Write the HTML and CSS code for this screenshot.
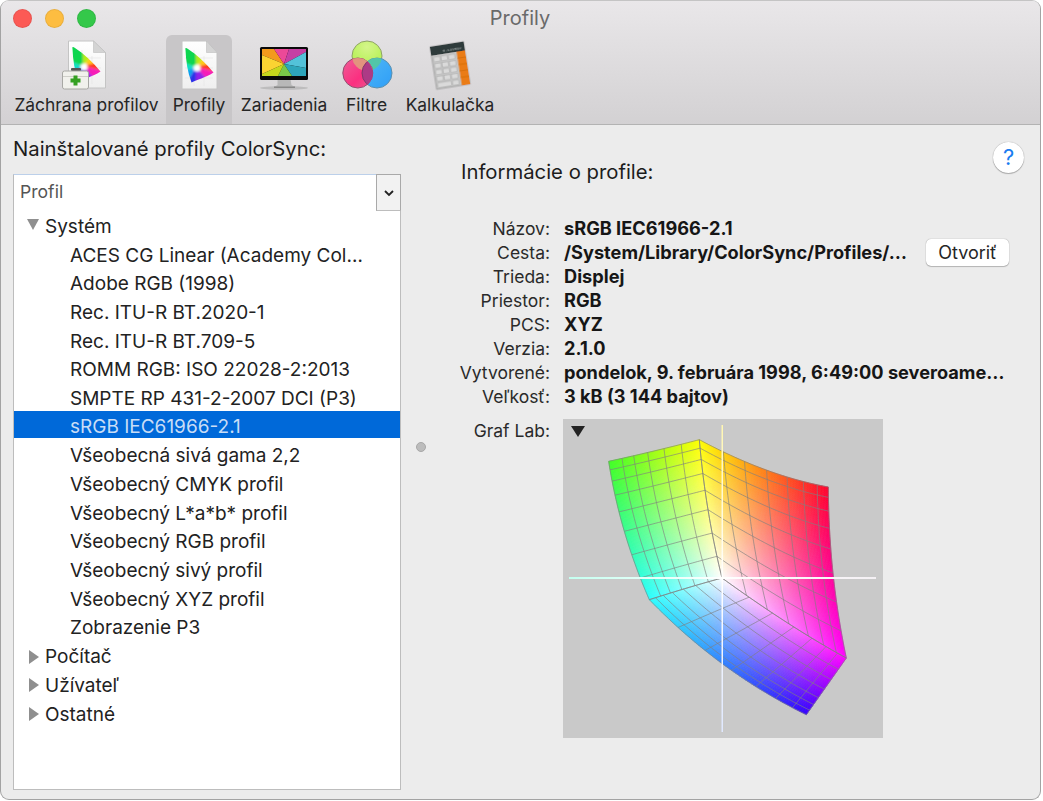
FILE: index.html
```html
<!DOCTYPE html>
<html lang="sk">
<head>
<meta charset="utf-8">
<title>Profily</title>
<link rel="stylesheet" href="styles.css">
</head>
<body>
<div class="window">
  <header class="chrome">
    <div class="titlebar">
      <div class="lights"><span class="light red"></span><span class="light yellow"></span><span class="light green"></span></div>
      <div class="title">Profily</div>
    </div>
    <nav class="toolbar">
      <div class="tool">
        <svg class="icon" viewBox="0 0 60 56" width="60" height="56">
          <defs>
            <filter id="soft" x="-30%" y="-30%" width="160%" height="160%"><feGaussianBlur stdDeviation="1"/></filter>
            <filter id="tiny" x="-10%" y="-10%" width="120%" height="120%"><feGaussianBlur stdDeviation=".35"/></filter>
            <clipPath id="tri"><path d="M3.500 9 C3 6.500 4 6.500 6 8 C15 14 24 22 31.500 31.500 C23 37 15 38.500 9.500 41.500 C5.500 31 4 20 3.500 9Z"/></clipPath>
            <linearGradient id="pg" x1="0" y1="0" x2="0" y2="1"><stop offset="0" stop-color="#ffffff"/><stop offset="1" stop-color="#efefef"/></linearGradient>
            <g id="gamut">
              <g clip-path="url(#tri)">
                <g filter="url(#soft)">
                  <path d="M14 26 L-4 20 L-4 0 L14 4Z" fill="#0fd650"/>
                  <path d="M14 26 L14 4 L24 14Z" fill="#b4ec18"/>
                  <path d="M14 26 L24 14 L30 22Z" fill="#ffc814"/>
                  <path d="M14 26 L30 22 L38 32Z" fill="#ff3a1e"/>
                  <path d="M14 26 L38 32 L30 44Z" fill="#f61cb8"/>
                  <path d="M14 26 L30 44 L14 46Z" fill="#9020e8"/>
                  <path d="M14 26 L14 46 L2 46Z" fill="#2a30e8"/>
                  <path d="M14 26 L2 46 L-4 32Z" fill="#10a0ee"/>
                  <path d="M14 26 L-4 32 L-4 20Z" fill="#10e0c0"/>
                  <circle cx="15" cy="27" r="3.500" fill="#fff"/>
                </g>
              </g>
            </g>
            <clipPath id="pinkc"><circle cx="15.800" cy="35" r="15"/></clipPath>
            <clipPath id="greenc"><circle cx="24.500" cy="18" r="15"/></clipPath>
            <radialGradient id="gg" cx=".5" cy=".2" r=".9"><stop offset="0" stop-color="#d4f58a"/><stop offset="1" stop-color="#aaf040"/></radialGradient>
            <linearGradient id="pk" x1="0" y1="0" x2="1" y2="1"><stop offset="0" stop-color="#ee5f97"/><stop offset=".6" stop-color="#fb2f80"/><stop offset="1" stop-color="#e9578f"/></linearGradient>
            <linearGradient id="bl" x1="0" y1="0" x2="1" y2="1"><stop offset="0" stop-color="#50b8f5"/><stop offset="1" stop-color="#2f9ef8"/></linearGradient>
          </defs>
          <g filter="url(#tiny)">
            <path d="M11.500 3 H36.500 L48.500 14.500 V50 H11.500Z" fill="url(#pg)" stroke="#c4c4c4"/>
            <path d="M36.500 3 V14.500 H48.500Z" fill="#d4d4d4" stroke="#bdbdbd" stroke-width=".6"/>
            <g stroke="#e2e2e2" stroke-width=".6"><path d="M16 20 H44 M16 30 H44 M25 12 V46 M35 18 V46"/></g>
            <use href="#gamut" x="12" y="2"/>
            <rect x="14" y="30" width="10" height="3" rx="1" fill="#555"/>
            <rect x="5.500" y="33" width="26" height="18" rx="2" fill="#f1f1ec" stroke="#a8a8a4"/>
            <path d="M6 38.500 H31" stroke="#c6c6c0" stroke-width=".8"/>
            <path d="M16.500 37.500 H20.500 V40.500 H23.500 V44.500 H20.500 V47.500 H16.500 V44.500 H13.500 V40.500 H16.500Z" fill="#34a020"/>
          </g>
        </svg>
        <span class="tool-label">Záchrana profilov</span>
      </div>
      <div class="tool active">
        <svg class="icon" viewBox="0 0 60 56" width="60" height="56">
          <g filter="url(#tiny)">
            <path d="M12.500 3 H37 L47.500 14.500 V51 H12.500Z" fill="url(#pg)" stroke="#c4c4c4" transform="translate(.5 0)"/>
            <path d="M37.500 3 V14.500 H48Z" fill="#d4d4d4" stroke="#bdbdbd" stroke-width=".6"/>
            <g stroke="#e4e4e4" stroke-width=".6"><path d="M16 20 H44 M16 30 H44 M16 40 H44 M25 12 V48 M35 18 V48"/></g>
            <use href="#gamut" x="13" y="3"/>
          </g>
        </svg>
        <span class="tool-label">Profily</span>
      </div>
      <div class="tool">
        <svg class="icon" viewBox="0 0 60 56" width="60" height="56">
          <ellipse cx="30" cy="50" rx="24" ry="1.800" fill="#aaa" opacity=".6"/>
          <path d="M23.500 41 H36.500 L37.500 47 L41 49 H20 L23.500 47Z" fill="#b8b8b8"/>
          <path d="M20 48.500 H41 V50 H20Z" fill="#888"/>
          <rect x="6" y="9" width="48" height="33" rx="1.500" fill="#0a0a0a"/>
          <g filter="url(#tiny)">
            <path d="M8 11 H20 L30 26 L8 17Z" fill="#f39a1c"/>
            <path d="M20 11 H35 L30 26Z" fill="#ec4a98"/>
            <path d="M35 11 H52 V14 L30 26Z" fill="#c640a4"/>
            <path d="M52 14 V30 L30 26Z" fill="#52c2d9"/>
            <path d="M52 30 V38 H38 L30 26Z" fill="#2ea6bb"/>
            <path d="M38 38 H24 L30 26Z" fill="#79c948"/>
            <path d="M24 38 H8 V36 L30 26Z" fill="#c6d71e"/>
            <path d="M8 36 V17 L30 26Z" fill="#fbd331"/>
          </g>
        </svg>
        <span class="tool-label">Zariadenia</span>
      </div>
      <div class="tool">
        <svg class="icon" viewBox="0 0 60 56" width="60" height="56">
          <circle cx="30" cy="18" r="15" fill="url(#gg)" stroke="#8fa367"/>
          <circle cx="40" cy="35" r="15" fill="url(#bl)" stroke="#5b8fae"/>
          <g clip-path="url(#greenc)" transform="translate(5.500 0)"><circle cx="34.500" cy="35" r="15" fill="#52c6a8"/></g>
          <circle cx="20.800" cy="35" r="15" fill="url(#pk)" stroke="#925070"/>
          <g clip-path="url(#pinkc)" transform="translate(5 0)">
            <circle cx="25" cy="18" r="15" fill="#e2937e"/>
            <circle cx="35" cy="35" r="15" fill="#ad3a86" stroke="#7f3a6a"/>
          </g>
        </svg>
        <span class="tool-label">Filtre</span>
      </div>
      <div class="tool">
        <svg class="icon" viewBox="0 0 60 56" width="60" height="56">
          <g transform="translate(-3 0) rotate(-9 33 27)" filter="url(#tiny)">
            <rect x="16" y="6" width="34" height="43" fill="#c4c4c4" stroke="#8c8c8c" stroke-width=".6"/>
            <rect x="16" y="6" width="34" height="9" fill="#2f3b3b"/>
            <text x="47" y="13" class="calc-display">3.141592</text>
            <rect x="41.500" y="15" width="8.500" height="34" fill="#ea7c12"/>
            <g fill="#dadada" stroke="#a8a8a8" stroke-width=".4">
              <rect x="18" y="17" width="6" height="4.500"/><rect x="25.500" y="17" width="6" height="4.500"/><rect x="33" y="17" width="6" height="4.500"/>
              <rect x="18" y="23.500" width="6" height="4.500"/><rect x="25.500" y="23.500" width="6" height="4.500"/><rect x="33" y="23.500" width="6" height="4.500"/>
              <rect x="18" y="30" width="6" height="4.500"/><rect x="25.500" y="30" width="6" height="4.500"/><rect x="33" y="30" width="6" height="4.500"/>
              <rect x="18" y="36.500" width="6" height="4.500"/><rect x="25.500" y="36.500" width="6" height="4.500"/><rect x="33" y="36.500" width="6" height="4.500"/>
              <rect x="18" y="43" width="13.500" height="4.500"/><rect x="33" y="43" width="6" height="4.500"/>
            </g>
            <path d="M41.500 21.500 H50 M41.500 28 H50 M41.500 34.500 H50 M41.500 41 H50" stroke="#c46408" stroke-width=".5"/>
          </g>
        </svg>
        <span class="tool-label">Kalkulačka</span>
      </div>
    </nav>
  </header>

  <main class="content">
    <section class="left">
      <h2 class="heading">Nainštalované profily ColorSync:</h2>
      <div class="list-header">
        <div class="list-column">Profil</div>
        <div class="list-chevron">
          <svg viewBox="0 0 12 8" width="12" height="8"><path d="M2 2 L6 6 L10 2" fill="none" stroke="#222" stroke-width="1.800"/></svg>
        </div>
      </div>
      <div class="tree">
        <div class="row group"><span class="tri tri-down"></span>Systém</div>
        <div class="row child">ACES CG Linear (Academy Col…</div>
        <div class="row child">Adobe RGB (1998)</div>
        <div class="row child">Rec. ITU-R BT.2020-1</div>
        <div class="row child">Rec. ITU-R BT.709-5</div>
        <div class="row child">ROMM RGB: ISO 22028-2:2013</div>
        <div class="row child">SMPTE RP 431-2-2007 DCI (P3)</div>
        <div class="row child selected">sRGB IEC61966-2.1</div>
        <div class="row child">Všeobecná sivá gama 2,2</div>
        <div class="row child">Všeobecný CMYK profil</div>
        <div class="row child">Všeobecný L*a*b* profil</div>
        <div class="row child">Všeobecný RGB profil</div>
        <div class="row child">Všeobecný sivý profil</div>
        <div class="row child">Všeobecný XYZ profil</div>
        <div class="row child">Zobrazenie P3</div>
        <div class="row group"><span class="tri"></span>Počítač</div>
        <div class="row group"><span class="tri"></span>Užívateľ</div>
        <div class="row group"><span class="tri"></span>Ostatné</div>
      </div>
    </section>

    <div class="splitter"><span class="split-dot"></span></div>

    <section class="right">
      <button class="help" type="button">?</button>
      <h2 class="heading info-heading">Informácie o profile:</h2>
      <div class="info">
        <div class="info-row"><span class="key">Názov:</span><span class="val">sRGB IEC61966-2.1</span></div>
        <div class="info-row"><span class="key">Cesta:</span><span class="val path">/System/Library/ColorSync/Profiles/…</span><button class="open" type="button">Otvoriť</button></div>
        <div class="info-row"><span class="key">Trieda:</span><span class="val">Displej</span></div>
        <div class="info-row"><span class="key">Priestor:</span><span class="val">RGB</span></div>
        <div class="info-row"><span class="key">PCS:</span><span class="val">XYZ</span></div>
        <div class="info-row"><span class="key">Verzia:</span><span class="val">2.1.0</span></div>
        <div class="info-row"><span class="key">Vytvorené:</span><span class="val">pondelok, 9. februára 1998, 6:49:00 severoame…</span></div>
        <div class="info-row"><span class="key">Veľkosť:</span><span class="val">3 kB (3 144 bajtov)</span></div>
      </div>
      <div class="graph-row">
        <span class="key graph-key">Graf Lab:</span>
        <div class="graph">
          <canvas id="lab" width="320" height="319"></canvas>
          <span class="graph-tri"></span>
        </div>
      </div>
    </section>
  </main>
</div>
<script src="script.js"></script>
</body>
</html>
```
FILE: styles.css
```css
* { box-sizing: border-box; }
html, body { margin: 0; padding: 0; background: #fff; }
body {
  width: 1043px;
  height: 801px;
  overflow: hidden;
  font-family: Inter, "Liberation Sans", sans-serif;
  color: #1e1e1e;
}
.window {
  width: 1041px;
  height: 800px;
  display: flex;
  flex-direction: column;
  background: #ececec;
  border: 1px solid #a3a3a3;
  border-top-color: #c4c4c4;
  border-radius: 9px;
  overflow: hidden;
}
.chrome {
  height: 124px;
  flex: none;
  background: linear-gradient(#e9e7e9, #d3d1d3);
  border-bottom: 1px solid #b3b3b3;
}
.titlebar {
  height: 34px;
  display: flex;
  align-items: center;
  position: relative;
}
.lights { display: flex; gap: 13px; padding-left: 11.500px; }
.light { width: 19px; height: 19px; border-radius: 50%; border: 1px solid rgba(0,0,0,.08); }
.red { background: #fc5a55; }
.yellow { background: #fdbd41; }
.green { background: #34c84a; }
.title {
  position: absolute;
  left: 0;
  right: 1px;
  top: 5px;
  text-align: center;
  font-size: 20px;
  line-height: 24px;
  color: #6a6a6a;
}
.toolbar {
  display: grid;
  grid-template-columns: 159px 66px 104px 61px 106px;
  height: 89px;
  padding-left: 6px;
}
.tool {
  display: flex;
  flex-direction: column;
  align-items: center;
  white-space: nowrap;
  padding-top: 3px;
}
.tool.active { background: #c8c6c8; border-radius: 6px 6px 0 0; }
.icon { display: block; flex: none; }
.tool-label { font-size: 17.400px; line-height: 22px; color: #262626; }
.calc-display { font-family: "Liberation Mono", monospace; font-size: 4px; fill: #aab4b4; text-anchor: end; }

.content {
  flex: 1;
  display: grid;
  grid-template-columns: 388px 39px 1fr;
  min-height: 0;
  padding-left: 12px;
}
.left { display: flex; flex-direction: column; padding-top: 10px; }
.heading { margin: 0; font-weight: 400; font-size: 20.300px; line-height: 28px; color: #1c1c1c; white-space: nowrap; }
.list-header {
  display: flex;
  height: 37px;
  margin-top: 11px;
  flex: none;
}
.list-column {
  flex: 1;
  background: #fff;
  border-top: 1px solid #bcd0ea;
  border-left: 1px solid #bbb;
  padding-left: 6px;
  font-size: 17.600px;
  line-height: 34px;
  color: #555;
}
.list-chevron {
  width: 25px;
  background: #f2f2f2;
  border: 1px solid #a9a9a9;
  border-bottom-color: #bdbdbd;
  display: flex;
  align-items: center;
  justify-content: center;
}
.tree {
  height: 579px;
  flex: none;
  background: #fff;
  border: 1px solid #bdbdbd;
  border-top: 0;
  padding-top: 1px;
  font-size: 19px;
  color: #222;
}
.row { height: 28.700px; display: flex; align-items: center; white-space: nowrap; }
.group { padding-left: 13px; }
.child { padding-left: 56px; }
.selected {
  height: 27.500px;
  margin: -2px 0 3.200px;
  padding-top: 4.400px;
  background: #0069d9;
  color: #c9ddf6;
}
.tri { width: 18px; height: 14px; flex: none; position: relative; }
.tri::before {
  content: "";
  position: absolute;
  left: 2px;
  top: 0;
  border-left: 10px solid #8f8f8f;
  border-top: 7px solid transparent;
  border-bottom: 7px solid transparent;
}
.tri-down::before {
  left: 0;
  top: 0;
  border-left: 6px solid transparent;
  border-right: 6px solid transparent;
  border-top: 11px solid #8f8f8f;
  border-bottom: 0;
}
.splitter { display: flex; justify-content: center; align-items: flex-start; padding: 317px 0 0 1px; }
.split-dot {
  width: 10px;
  height: 10px;
  border-radius: 50%;
  background: #bcbcbc;
  border: 1px solid #a8a8a8;
}
.right { position: relative; display: flex; flex-direction: column; }
.help {
  position: absolute;
  right: 16px;
  top: 17px;
  width: 31px;
  height: 31px;
  padding: 0;
  border-radius: 50%;
  border: 0;
  background: #fff;
  box-shadow: 0 0 1px rgba(0,0,0,.4), 0 1px 1px rgba(0,0,0,.25);
  color: #1a7df0;
  font: 400 22px/31px Inter, "Liberation Sans", sans-serif;
}
.info-heading { margin: 33px 0 0 21px; }
.info { margin-top: 30px; display: flex; flex-direction: column; }
.info-row { height: 24px; display: flex; align-items: center; white-space: nowrap; }
.key {
  width: 110px;
  flex: none;
  margin-right: 14px;
  text-align: right;
  font-size: 17.500px;
  color: #2a2a2a;
}
.val { font-size: 18.200px; font-weight: 700; color: #161616; }
.path { width: 341px; flex: none; }
.open {
  width: 83px;
  height: 27px;
  flex: none;
  margin-left: 21px;
  padding: 0;
  border: 0;
  border-radius: 5px;
  background: #fff;
  box-shadow: 0 0 1px rgba(0,0,0,.45), 0 1px 1px rgba(0,0,0,.2);
  color: #262626;
  font: 400 18px/27px Inter, "Liberation Sans", sans-serif;
}
.graph-row { display: flex; margin-top: 11px; align-items: flex-start; }
.graph-key { line-height: 24px; margin-right: 13px; }
.graph { position: relative; width: 320px; height: 319px; background: #c9c9c9; }
.graph canvas { display: block; filter: blur(.4px); }
.graph-tri {
  position: absolute;
  left: 8px;
  top: 7px;
  border-left: 7px solid transparent;
  border-right: 7px solid transparent;
  border-top: 11px solid #222;
}
```
FILE: script.js
```js
(function () {
  var ctx = document.getElementById('lab').getContext('2d');
  // Reference points measured at 3x; convert to canvas space.
  function p(x, y) { return [(x - 38) / 3, (y - 28) / 3]; }
  var GREEN = p(175, 155), YELLOW = p(447, 90), RED = p(834, 232), MAGENTA = p(888, 745),
      BLUE = p(768, 915), CYAN = p(297, 570), WHITE = p(515, 505);
  var cG = [62, 255, 36], cY = [255, 255, 0], cR = [255, 0, 44], cM = [255, 0, 255],
      cB = [50, 0, 255], cC = [40, 255, 255], cW = [255, 255, 255];

  function edge(a, m, b) {
    var c = [2 * m[0] - (a[0] + b[0]) / 2, 2 * m[1] - (a[1] + b[1]) / 2];
    return function (t) {
      var s = 1 - t;
      return [s * s * a[0] + 2 * s * t * c[0] + t * t * b[0], s * s * a[1] + 2 * s * t * c[1] + t * t * b[1]];
    };
  }
  var dense = [0, .2, .38, .55, .7, .82, .92, 1];
  var faces = [
    { c: [GREEN, YELLOW, CYAN, WHITE], k: [cG, cY, cC, cW],
      top: edge(GREEN, p(311, 124), YELLOW), bot: edge(CYAN, p(410, 535), WHITE),
      left: edge(GREEN, p(222, 365), CYAN), right: edge(YELLOW, p(473, 300), WHITE),
      us: [0, .147, .276, .43, .61, .8, 1], vs: [0, .06, .14, .24, .36, .5, .67, .84, 1] },
    { c: [YELLOW, RED, WHITE, MAGENTA], k: [cY, cR, cW, cM],
      top: edge(YELLOW, p(645, 180), RED), bot: edge(WHITE, p(712, 640), MAGENTA),
      left: edge(YELLOW, p(473, 300), WHITE), right: edge(RED, p(848, 490), MAGENTA),
      us: [0, .18, .34, .51, .67, .8, .91, 1], vs: [0, .06, .14, .24, .36, .5, .67, .84, 1] },
    { c: [WHITE, MAGENTA, CYAN, BLUE], k: [cW, cM, cC, cB],
      top: edge(WHITE, p(712, 640), MAGENTA), bot: edge(CYAN, p(520, 765), BLUE),
      left: edge(WHITE, p(410, 535), CYAN), right: edge(MAGENTA, p(828, 830), BLUE),
      us: dense, vs: dense }
  ];
  function point(f, u, v) {
    var t = f.top(u), b = f.bot(u), l = f.left(v), r = f.right(v), c = f.c, out = [];
    for (var i = 0; i < 2; i++) {
      out[i] = (1 - v) * t[i] + v * b[i] + (1 - u) * l[i] + u * r[i] -
        ((1 - u) * (1 - v) * c[0][i] + u * (1 - v) * c[1][i] + (1 - u) * v * c[2][i] + u * v * c[3][i]);
    }
    return out;
  }
  function colour(f, u, v) {
    var k = f.k, o = [];
    for (var i = 0; i < 3; i++) {
      o[i] = Math.round((1 - u) * (1 - v) * k[0][i] + u * (1 - v) * k[1][i] + (1 - u) * v * k[2][i] + u * v * k[3][i]);
    }
    return 'rgb(' + o.join(',') + ')';
  }
  var N = 80;
  faces.forEach(function (f) {
    for (var i = 0; i < N; i++) {
      for (var j = 0; j < N; j++) {
        var u0 = i / N, u1 = (i + 1) / N, v0 = j / N, v1 = (j + 1) / N;
        var a = point(f, u0, v0), b = point(f, u1, v0), c = point(f, u1, v1), d = point(f, u0, v1);
        var col = colour(f, (u0 + u1) / 2, (v0 + v1) / 2);
        ctx.fillStyle = col; ctx.strokeStyle = col; ctx.lineWidth = .6;
        ctx.beginPath(); ctx.moveTo(a[0], a[1]); ctx.lineTo(b[0], b[1]); ctx.lineTo(c[0], c[1]); ctx.lineTo(d[0], d[1]);
        ctx.closePath(); ctx.fill(); ctx.stroke();
      }
    }
  });
  ctx.strokeStyle = 'rgba(128,128,128,.65)';
  ctx.lineWidth = 1;
  faces.forEach(function (f) {
    f.us.forEach(function (u) {
      ctx.beginPath();
      for (var s = 0; s <= 30; s++) { var q = point(f, u, s / 30); ctx[s ? 'lineTo' : 'moveTo'](q[0], q[1]); }
      ctx.stroke();
    });
    f.vs.forEach(function (v) {
      ctx.beginPath();
      for (var s = 0; s <= 30; s++) { var q = point(f, s / 30, v); ctx[s ? 'lineTo' : 'moveTo'](q[0], q[1]); }
      ctx.stroke();
    });
  });
  var h = ctx.createLinearGradient(6, 0, 313, 0);
  h.addColorStop(0, '#c4fff0'); h.addColorStop(.5, '#ffffff'); h.addColorStop(1, '#f4f0f4');
  ctx.fillStyle = h; ctx.fillRect(6, 158, 307, 2);
  var w = ctx.createLinearGradient(0, 6, 0, 313);
  w.addColorStop(0, '#fff6b0'); w.addColorStop(.5, '#ffffff'); w.addColorStop(1, '#dfe8ff');
  ctx.fillStyle = w; ctx.fillRect(158.5, 6, 1.5, 307);
})();
```
